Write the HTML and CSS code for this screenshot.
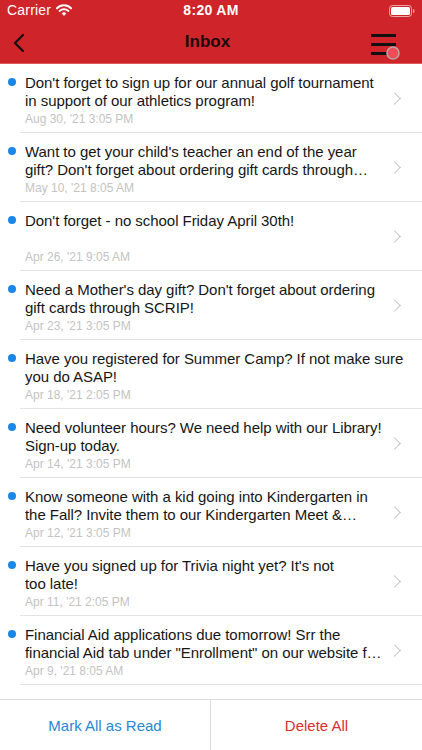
FILE: index.html
```html
<!DOCTYPE html>
<html lang="en">
<head>
    <meta charset="UTF-8">
    <meta name="viewport" content="width=device-width, initial-scale=1.0">
    <title>Inbox</title>
    <link rel="stylesheet" href="styles.css">
</head>
<body>
    <div class="app">
        <header class="top">
            <div class="status-bar">
                <div class="status-left">
                    <span>Carrier</span>
                    <svg class="wifi" width="16" height="12" viewBox="0 0 16 12">
                        <path d="M1 4.2 A10 10 0 0 1 15 4.2" fill="none" stroke="#fff" stroke-width="2" stroke-linecap="round"/>
                        <path d="M3.6 6.9 A6.4 6.4 0 0 1 12.4 6.9" fill="none" stroke="#fff" stroke-width="2" stroke-linecap="round"/>
                        <path d="M6.2 9.4 A2.8 2.8 0 0 1 9.8 9.4 L8 11.4 Z" fill="#fff" stroke="#fff" stroke-width="1" stroke-linejoin="round"/>
                    </svg>
                </div>
                <div class="status-time">8:20 AM</div>
                <div class="status-right">
                    <svg width="26" height="12" viewBox="0 0 26 12">
                        <rect x="0.5" y="0.5" width="22" height="11" rx="3" fill="none" stroke="#fff" stroke-opacity="0.6"/>
                        <rect x="2" y="2" width="19" height="8" rx="1.5" fill="#fff"/>
                        <path d="M24 4 Q25.5 4 25.5 6 Q25.5 8 24 8 Z" fill="#fff" fill-opacity="0.6"/>
                    </svg>
                </div>
            </div>
            <nav class="nav-bar">
                <svg class="back" width="14" height="20" viewBox="0 0 14 20">
                    <path d="M11 2 L3 10 L11 18" fill="none" stroke="#111" stroke-width="2.2" stroke-linecap="round" stroke-linejoin="round"/>
                </svg>
                <h1>Inbox</h1>
                <div class="menu">
                    <svg width="34" height="30" viewBox="0 0 34 30">
                        <rect x="2" y="2" width="25" height="3" fill="#111"/>
                        <rect x="2" y="11" width="25" height="3" fill="#111"/>
                        <rect x="2" y="20" width="20" height="3" fill="#111"/>
                        <circle cx="24" cy="21" r="6" fill="#ef4d55" stroke="#b9a3a4" stroke-width="1.6"/>
                    </svg>
                </div>
            </nav>
        </header>

        <ul class="messages">
            <li class="message">
                <span class="dot"></span>
                <div class="message-body">
                    <p class="message-text">Don't forget to sign up for our annual golf tournament in support of our athletics program!</p>
                    <span class="message-date">Aug 30, '21 3:05 PM</span>
                </div>
                <span class="chevron"></span>
            </li>
            <li class="message">
                <span class="dot"></span>
                <div class="message-body">
                    <p class="message-text">Want to get your child's teacher an end of the year gift? Don't forget about ordering gift cards through SCRIP for our teachers!</p>
                    <span class="message-date">May 10, '21 8:05 AM</span>
                </div>
                <span class="chevron"></span>
            </li>
            <li class="message">
                <span class="dot"></span>
                <div class="message-body">
                    <p class="message-text">Don't forget - no school Friday April 30th!</p>
                    <span class="message-date">Apr 26, '21 9:05 AM</span>
                </div>
                <span class="chevron"></span>
            </li>
            <li class="message">
                <span class="dot"></span>
                <div class="message-body">
                    <p class="message-text">Need a Mother's day gift? Don't forget about ordering gift cards through SCRIP!</p>
                    <span class="message-date">Apr 23, '21 3:05 PM</span>
                </div>
                <span class="chevron"></span>
            </li>
            <li class="message">
                <span class="dot"></span>
                <div class="message-body">
                    <p class="message-text">Have you registered for Summer Camp? If not make sure you do ASAP!</p>
                    <span class="message-date">Apr 18, '21 2:05 PM</span>
                </div>
            </li>
            <li class="message">
                <span class="dot"></span>
                <div class="message-body">
                    <p class="message-text">Need volunteer hours? We need help with our Library! Sign-up today.</p>
                    <span class="message-date">Apr 14, '21 3:05 PM</span>
                </div>
                <span class="chevron"></span>
            </li>
            <li class="message">
                <span class="dot"></span>
                <div class="message-body">
                    <p class="message-text">Know someone with a kid going into Kindergarten in the Fall? Invite them to our Kindergarten Meet &amp; Greet!</p>
                    <span class="message-date">Apr 12, '21 3:05 PM</span>
                </div>
                <span class="chevron"></span>
            </li>
            <li class="message">
                <span class="dot"></span>
                <div class="message-body">
                    <p class="message-text">Have you signed up for Trivia night yet? It's not<br>too late!</p>
                    <span class="message-date">Apr 11, '21 2:05 PM</span>
                </div>
                <span class="chevron"></span>
            </li>
            <li class="message">
                <span class="dot"></span>
                <div class="message-body">
                    <p class="message-text">Financial Aid applications due tomorrow! Srr the financial Aid tab under "Enrollment" on our website for details.</p>
                    <span class="message-date">Apr 9, '21 8:05 AM</span>
                </div>
                <span class="chevron"></span>
            </li>
        </ul>

        <footer class="actions">
            <button class="action read">Mark All as Read</button>
            <button class="action delete">Delete All</button>
        </footer>
    </div>
</body>
</html>
```

FILE: styles.css
```css
/* Reset */
body, h1, p, ul, button {
    margin: 0;
    padding: 0;
}

body {
    font-family: "Liberation Sans", Arial, sans-serif;
    background-color: #fff;
    color: #111;
}

.app {
    display: flex;
    flex-direction: column;
    width: 422px;
    height: 750px;
    overflow: hidden;
}

/* Cabeçalho */
.top {
    background-color: #cf242a;
    border-bottom: 1px solid #dc5a5e;
}

.status-bar {
    display: grid;
    grid-template-columns: 1fr auto 1fr;
    align-items: center;
    height: 20px;
    padding: 0 7px;
    color: #fff;
    font-size: 14px;
}

.status-left {
    display: flex;
    align-items: center;
    gap: 5px;
    letter-spacing: 0.2px;
}

.status-time {
    font-weight: bold;
    letter-spacing: 0.3px;
}

.status-right {
    display: flex;
    justify-content: flex-end;
    padding-top: 1px;
}

.nav-bar {
    display: grid;
    grid-template-columns: 1fr auto 1fr;
    align-items: center;
    height: 43px;
    padding: 0 19px 0 12px;
}

.nav-bar h1 {
    font-size: 17px;
    font-weight: bold;
    color: #1a0c0c;
}

.back {
    margin-top: 2px;
}

.menu {
    display: flex;
    justify-content: flex-end;
    margin-top: 11px;
}

/* Lista de mensagens */
.messages {
    flex: 1;
    list-style: none;
    overflow: hidden;
}

.message {
    position: relative;
    display: flex;
    align-items: center;
    height: 68px;
    margin-left: 20px;
    padding-left: 5px;
    border-bottom: 1px solid #e3e3e3;
}

.dot {
    position: absolute;
    left: -12px;
    top: 14px;
    width: 8px;
    height: 8px;
    border-radius: 50%;
    background-color: #1a86e8;
}

.message-body {
    flex: 1;
    display: flex;
    flex-direction: column;
    align-self: stretch;
    padding: 10px 0 5px;
    min-width: 0;
}

.message-text {
    font-size: 15px;
    line-height: 18px;
    letter-spacing: -0.05px;
    color: #161616;
    display: -webkit-box;
    -webkit-line-clamp: 2;
    -webkit-box-orient: vertical;
    overflow: hidden;
}

.message-date {
    margin-top: auto;
    font-size: 12px;
    line-height: 15px;
    color: #c3c3c3;
}

.chevron {
    width: 8px;
    height: 8px;
    margin: 0 23px 0 5px;
    border-top: 1.8px solid #c5c5c9;
    border-right: 1.8px solid #c5c5c9;
    transform: rotate(45deg);
    flex-shrink: 0;
}

/* Rodapé */
.actions {
    display: grid;
    grid-template-columns: 1fr 1fr;
    height: 50px;
    border-top: 1px solid #dcdcdc;
}

.action {
    border: none;
    background: #fff;
    font-family: "Liberation Sans", Arial, sans-serif;
    font-size: 15px;
    cursor: pointer;
}

.read {
    color: #2a85d6;
    border-right: 1px solid #dcdcdc;
}

.delete {
    color: #d8302f;
}
```
